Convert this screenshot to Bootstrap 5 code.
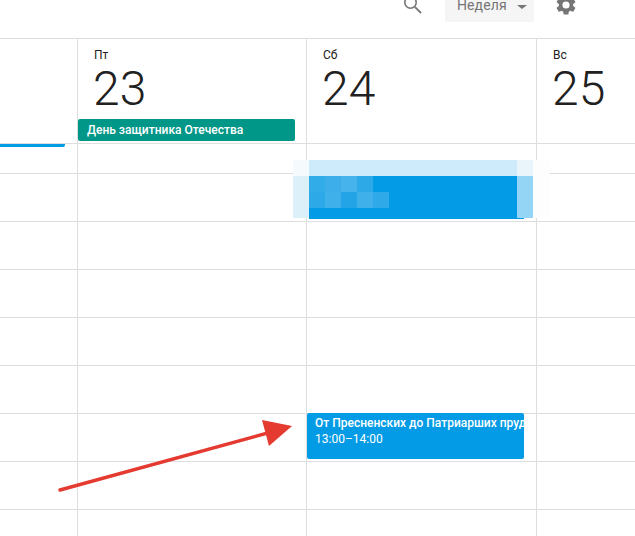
<!DOCTYPE html>
<html lang="ru">
<head>
    <meta charset="UTF-8">
    <meta name="viewport" content="width=device-width, initial-scale=1.0">
    <title>Календарь</title>
    <link href="https://cdn.jsdelivr.net/npm/bootstrap@5.3.3/dist/css/bootstrap.min.css" rel="stylesheet">
    <style>
        html, body {
            height: 536px;
            overflow: hidden;
        }
        body {
            font-family: Roboto, "Liberation Sans", sans-serif;
            background-color: #fff;
            color: #212121;
        }
        .topbar {
            height: 38px;
            padding-right: 57px;
            overflow: hidden;
        }
        .topbar svg {
            flex: none;
            margin-top: -7px;
        }
        .gear-icon { fill: #757575; }
        .search-icon {
            fill: none;
            stroke: #757575;
        }
        .view-btn {
            width: 89px;
            height: 22px;
            margin: 0 20px 0 20px;
            padding: 0 7px 0 12px;
            background-color: #f5f5f5;
            border-radius: 0 0 2px 2px;
            color: #757575;
            font-size: 14px;
            letter-spacing: .1px;
            line-height: 11px;
        }
        .view-caret {
            margin-top: 5px;
            border-left: 5px solid transparent;
            border-right: 5px solid transparent;
            border-top: 4px solid #757575;
        }
        .cal-row {
            display: grid;
            grid-template-columns: 78px 229px 230px 1fr;
            border-top: 1px solid #dedede;
        }
        .cal-cell {
            border-right: 1px solid #dedede;
        }
        .cal-cell:last-child {
            border-right: 0;
        }
        .head-row .cal-cell {
            height: 104px;
            padding-top: 9px;
        }
        .day-name {
            padding-left: 16px;
            font-size: 12px;
            line-height: 14px;
        }
        .day-num {
            padding-left: 15px;
            font-size: 48px;
            font-weight: 300;
            line-height: 48px;
            margin-top: 3px;
        }
        .holiday {
            width: 217px;
            height: 22px;
            margin-top: 6px;
            padding-left: 9px;
            background-color: #009688;
            border-radius: 2px;
            color: #fff;
            font-size: 12px;
            font-weight: 500;
            line-height: 22px;
        }
        .hour-first .cal-cell { height: 29px; }
        .hour .cal-cell { height: 47px; }
        .now-line {
            position: absolute;
            left: 0;
            top: 1px;
            width: 65px;
            height: 3px;
            background-color: #039be5;
            border-radius: 0 0 2px 0;
        }
        .event-solid {
            position: absolute;
            left: 307px;
            top: 270px;
            width: 217px;
            height: 46px;
            padding: 2px 0 0 8px;
            background-color: #039be5;
            border-radius: 2px;
            color: #fff;
            font-size: 12px;
            line-height: 16px;
            overflow: hidden;
            white-space: nowrap;
        }
        .event-solid b { font-weight: 500; }
        .event-under {
            position: absolute;
            left: 309px;
            top: 71px;
            width: 215px;
            height: 5px;
            background-color: #039be5;
        }
        .mosaic {
            position: absolute;
            left: 293px;
            top: 17px;
            display: grid;
            grid-template-columns: repeat(16, 16px);
            grid-template-rows: 16px 16px 16px 10px;
        }
        .mosaic i { display: block; }
        .arrow {
            position: absolute;
            left: 50px;
            top: 266px;
            fill: #e53a30;
            stroke: #e53a30;
        }
    </style>
</head>
<body>

    <div class="topbar d-flex justify-content-end align-items-start">
        <svg class="search-icon" width="24" height="24" viewBox="0 0 24 24"><circle cx="9.5" cy="9.5" r="5.7" stroke-width="1.6"/><line x1="13.8" y1="13.8" x2="20" y2="20" stroke-width="1.8"/></svg>
        <div class="view-btn d-flex justify-content-between align-items-start">
            <span>Неделя</span>
            <span class="view-caret"></span>
        </div>
        <svg class="gear-icon" width="24" height="24" viewBox="0 0 24 24"><path d="M19.14 12.94c.04-.3.06-.61.06-.94 0-.32-.02-.64-.07-.94l2.03-1.58a.49.49 0 0 0 .12-.61l-1.92-3.32a.488.488 0 0 0-.59-.22l-2.39.96c-.5-.38-1.03-.7-1.62-.94l-.36-2.54a.484.484 0 0 0-.48-.41h-3.84c-.24 0-.43.17-.47.41l-.36 2.54c-.59.24-1.13.57-1.62.94l-2.39-.96c-.22-.08-.47 0-.59.22L2.74 8.87c-.12.21-.08.47.12.61l2.03 1.58c-.05.3-.09.63-.09.94s.02.64.07.94l-2.03 1.58a.49.49 0 0 0-.12.61l1.92 3.32c.12.22.37.29.59.22l2.39-.96c.5.38 1.03.7 1.62.94l.36 2.54c.05.24.24.41.48.41h3.84c.24 0 .44-.17.47-.41l.36-2.54c.59-.24 1.13-.56 1.62-.94l2.39.96c.22.08.47 0 .59-.22l1.92-3.32c.12-.22.07-.47-.12-.61l-2.01-1.58zM12 15.6A3.6 3.6 0 1 1 12 8.4a3.6 3.6 0 0 1 0 7.2z"/></svg>
    </div>

    <div class="cal-row head-row">
        <div class="cal-cell"></div>
        <div class="cal-cell">
            <div class="day-name">Пт</div>
            <div class="day-num">23</div>
            <div class="holiday">День защитника Отечества</div>
        </div>
        <div class="cal-cell">
            <div class="day-name">Сб</div>
            <div class="day-num">24</div>
        </div>
        <div class="cal-cell">
            <div class="day-name">Вс</div>
            <div class="day-num">25</div>
        </div>
    </div>

    <div id="cal-body" class="position-relative"></div>

    <script>
        const body = document.getElementById('cal-body');
        const emptyCells = '<div class="cal-cell"></div>'.repeat(4);

        // 1 short row under the header, then the hours
        let html = `<div class="cal-row hour-first">${emptyCells}</div>`;
        for (let i = 0; i < 8; i++) {
            html += `<div class="cal-row hour">${emptyCells}</div>`;
        }

        html += '<div class="now-line"></div>';

        // pixelated (censored) event
        const b = '#039be5';
        const band = '#cdebfa';
        const left = '#dcf0fa';
        const right = '#94d5f5';
        const rows = [
            ['#f5fbfd', ...Array(13).fill(band), '#e9f5fb', '#fdfdfe'],
            [left, '#32ace9', '#3daeea', '#47b3ec', '#2ea9e8', ...Array(9).fill(b), right, '#fdfdfe'],
            [left, '#2da9e8', '#40b0ea', '#22a4e6', '#40b0eb', '#2fa9e8', ...Array(8).fill(b), right, '#fdfdfe'],
            [left, ...Array(13).fill(b), right, '#fdfdfe']
        ];
        html += '<div class="event-under"></div><div class="mosaic">';
        rows.forEach(row => row.forEach(c => {
            html += `<i style="background-color:${c}"></i>`;
        }));
        html += '</div>';

        html += `<div class="event-solid"><b>От Пресненских до Патриарших прудов</b><br>13:00–14:00</div>`;

        html += `<svg class="arrow" width="250" height="90" viewBox="50 409 250 90">
            <line x1="60" y1="490" x2="275" y2="431" stroke-width="3.4" stroke-linecap="round"/>
            <polygon stroke="none" points="262,420 292,426 269,446"/>
        </svg>`;

        body.innerHTML = html;
    </script>
    <script src="https://cdn.jsdelivr.net/npm/bootstrap@5.3.3/dist/js/bootstrap.bundle.min.js"></script>
</body>
</html>
